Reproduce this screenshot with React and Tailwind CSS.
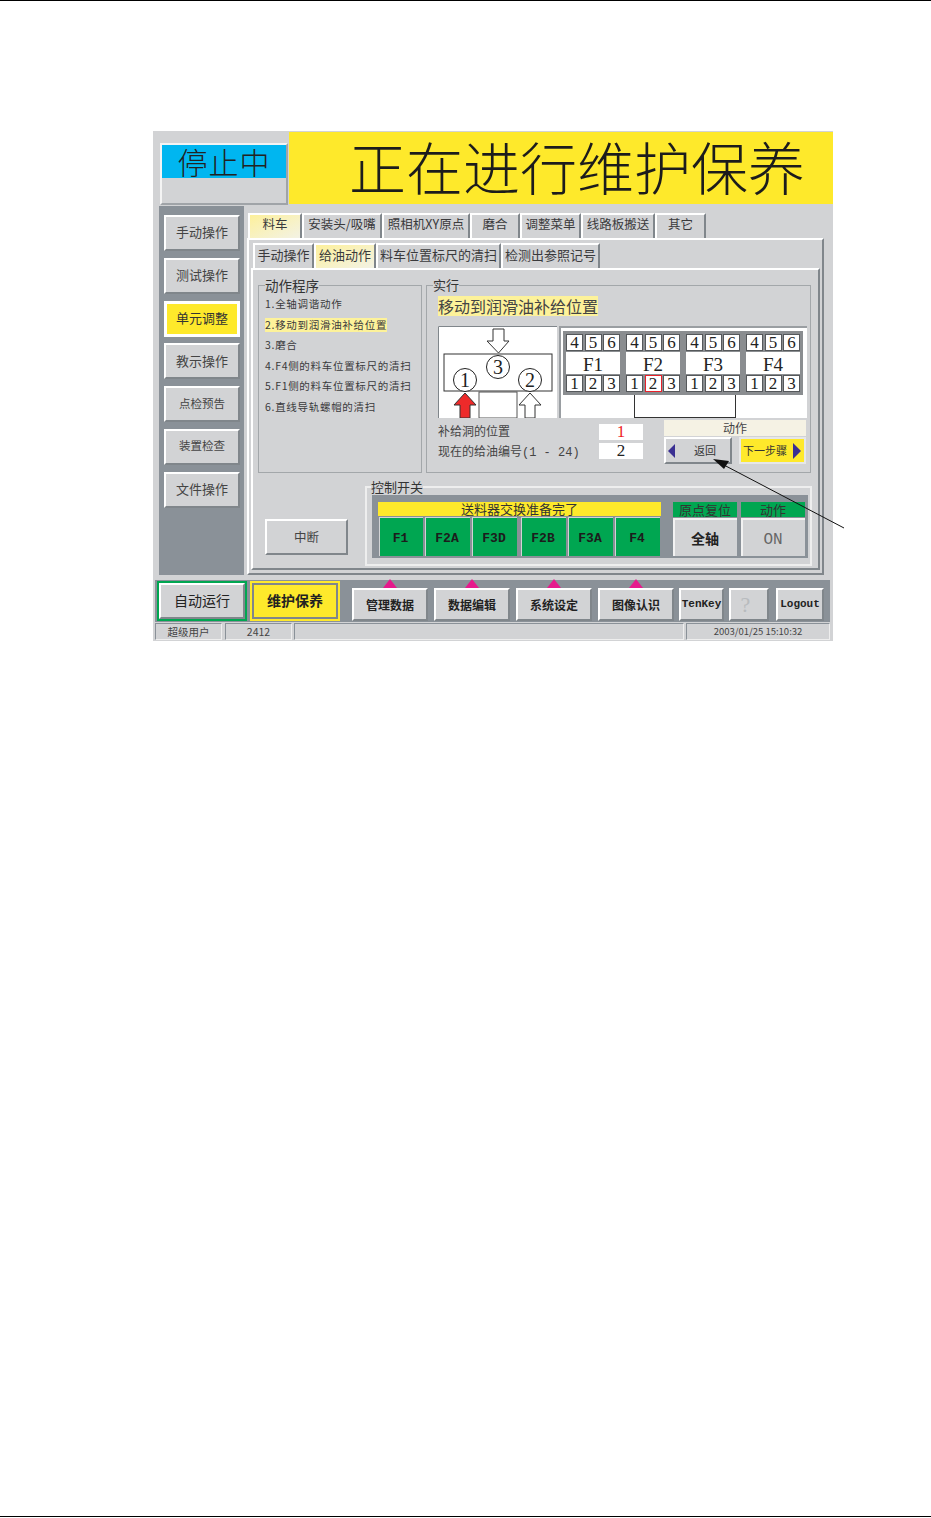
import React from 'react';

const cjk = { fontFamily: '"Noto Sans CJK SC", sans-serif' };
const serif = { fontFamily: '"Liberation Serif", "Noto Sans CJK SC", serif' };
const mono = { fontFamily: '"Liberation Mono", "Noto Sans CJK SC", monospace' };

const raised = 'border-2 border-t-white border-l-white border-r-[#80868b] border-b-[#80868b]';

const sideButtons = [
  { label: '手动操作', size: 'text-[13px]' },
  { label: '测试操作', size: 'text-[13px]' },
  { label: '单元调整', size: 'text-[13px]', active: true },
  { label: '教示操作', size: 'text-[13px]' },
  { label: '点检预告', size: 'text-[11.5px]' },
  { label: '装置检查', size: 'text-[11.5px]' },
  { label: '文件操作', size: 'text-[13px]' },
];

const tabs = [
  { label: '料车', w: 'w-[54px]', active: true },
  { label: '安装头/吸嘴', w: 'w-[80px]' },
  { label: '照相机XY原点', w: 'w-[88px]' },
  { label: '磨合', w: 'w-[50px]' },
  { label: '调整菜单', w: 'w-[61px]' },
  { label: '线路板搬送', w: 'w-[74px]' },
  { label: '其它', w: 'w-[51px]' },
];

const subTabs = [
  { label: '手动操作', w: 'w-[61px]' },
  { label: '给油动作', w: 'w-[62px]', active: true },
  { label: '料车位置标尺的清扫', w: 'w-[125px]' },
  { label: '检测出参照记号', w: 'w-[99px]' },
];

const steps = [
  '1.全轴调谐动作',
  '2.移动到润滑油补给位置',
  '3.磨合',
  '4.F4侧的料车位置标尺的清扫',
  '5.F1侧的料车位置标尺的清扫',
  '6.直线导轨螺帽的清扫',
];

const feeders = ['F1', 'F2A', 'F3D', 'F2B', 'F3A', 'F4'];
const feederWidths = ['w-[44px]', 'w-[45px]', 'w-[45px]', 'w-[45px]', 'w-[45px]', 'w-[45px]'];
const feederGaps = ['', 'ml-[2px]', 'ml-[2px]', 'ml-[4px]', 'ml-[2px]', 'ml-[2px]'];

function Tab({ label, w, active, size = 'text-[12.5px]', pad = 'pb-[4px]' }) {
  return (
    <div
      className={`${w} h-[25px] ${pad} ${size} flex items-center justify-center whitespace-nowrap border-t-2 border-l-2 border-t-white border-l-white border-r-2 border-r-[#80868b] text-[#3a3a3c] ${active ? 'bg-gradient-to-br from-[#fdf09a] to-[#f3f2e4]' : ''}`}
    >
      {label}
    </div>
  );
}

function NumBox({ n, hot }) {
  return (
    <div
      className={`w-[17px] h-[17px] flex items-center justify-center bg-white text-[17px] leading-none text-[#222] border ${hot ? 'border-[#e8202a]' : 'border-[#55585b]'}`}
      style={serif}
    >
      {n}
    </div>
  );
}

function FeederBlock({ name, hot }) {
  return (
    <div className="w-[60px] h-[64px] bg-white border-[3px] border-[#8a8d90] flex flex-col justify-between">
      <div className="flex justify-between bg-[#8a8d90] pb-px">
        {[4, 5, 6].map(n => <NumBox key={n} n={n} />)}
      </div>
      <div className="pt-[3px] text-center text-[19px] leading-none text-[#222]" style={serif}>{name}</div>
      <div className="flex justify-between bg-[#8a8d90] pt-px">
        {[1, 2, 3].map(n => <NumBox key={n} n={n} hot={hot && n === 2} />)}
      </div>
    </div>
  );
}

function MachineDiagram() {
  const circles = [
    { n: 3, x: 60, y: 41 },
    { n: 1, x: 27, y: 54 },
    { n: 2, x: 92, y: 54 },
  ];
  return (
    <svg width="119" height="92" viewBox="0 0 119 92" className="shrink-0">
      <rect width="119" height="92" fill="#fff" />
      <path d="M0.5 92V0.5H119" fill="none" stroke="#80868b" />
      <rect x="6" y="28" width="108" height="37" fill="#fff" stroke="#333" />
      <rect x="41" y="66" width="38" height="26" fill="#fff" stroke="#555" />
      <path d="M55 3H66V15H71L60.500 27L49 15H55Z" fill="#fff" stroke="#333" />
      <path d="M27 67L38 79H32V92H22V79H16Z" fill="#ee2a2a" stroke="#333" />
      <path d="M92 67L103 79H97V92H87V79H81Z" fill="#fff" stroke="#333" />
      {circles.map(c => (
        <g key={c.n}>
          <circle cx={c.x} cy={c.y} r="11.500" fill="#fff" stroke="#222" />
          <text x={c.x} y={c.y + 7} textAnchor="middle" fontSize="20" fill="#222" style={serif}>{c.n}</text>
        </g>
      ))}
    </svg>
  );
}

function BottomButton({ label, w, ml, bold = true, tri, font, color = 'text-[#222]', size = 'text-[12px]', extra = '' }) {
  return (
    <div className={`relative ${w} ${ml} h-[33px] ${raised} bg-[#d2d3d5] flex items-center justify-center ${size} ${bold ? 'font-bold' : ''} ${color} ${extra}`} style={font}>
      {tri && (
        <span className="absolute -top-[11px] left-1/2 -translate-x-1/2 w-0 h-0 border-x-[7px] border-x-transparent border-b-[9px] border-b-[#e6198c]" />
      )}
      {label}
    </div>
  );
}

export default function App() {
  return (
    <div className="relative w-[931px] h-[1518px] bg-white flex flex-col justify-between overflow-hidden" style={cjk}>
      <div className="h-[1px] bg-black" />

      <div className="ml-[153px] mb-auto mt-[130px] w-[680px] h-[510px] bg-[#d2d3d5]">
        {/* header */}
        <div className="flex h-[75px]">
          <div className="w-[136px] pl-[7px] pt-[12px]">
            <div className="w-[128px] h-[62px] border-2 border-t-[#f4f4f4] border-l-[#f4f4f4] border-r-[#a0a4a8] border-b-[#a0a4a8]">
              <div className="h-[33px] pb-[2px] bg-[#00b6f0] flex items-center justify-center text-[30px] font-light tracking-[1px] text-[#222] leading-none">
                停止中
              </div>
            </div>
          </div>
          <div className="w-[544px] h-[72px] mt-[1px] pb-[6px] bg-[#fee92b] flex items-center pl-[60px] text-[57px] font-light leading-none whitespace-nowrap text-[#1c1c1c]">
            正在进行维护保养
          </div>
        </div>

        {/* main */}
        <div className="flex pl-[6px]">
          <div className="w-[85px] h-[369px] bg-[#8a9198] pl-[5px] pt-[9px] flex flex-col gap-[6.8px]">
            {sideButtons.map(b => (
              <div
                key={b.label}
                className={`w-[76px] h-[36px] pb-[2px] flex items-center justify-center ${b.size} ${b.active ? 'bg-[#fee92b] border-[3px] border-white outline outline-1 outline-[#8a9198] text-[#333]' : `${raised} bg-[#d2d3d5] text-[#444]`}`}
              >
                {b.label}
              </div>
            ))}
          </div>

          <div className="pl-[2px] pt-[7px]">
            <div className="flex pl-[2px]">
              {tabs.map(t => <Tab key={t.label} {...t} />)}
            </div>
            <div className="ml-px w-[577px] h-[337px] border-2 border-t-white border-l-white border-r-[#80868b] border-b-[#80868b] pl-[2px] pt-[3px]">
              <div className="flex pl-[2px]">
                {subTabs.map(t => <Tab key={t.label} {...t} size="text-[13px]" pad="pb-[3px]" />)}
              </div>
              <div className="w-[569px] h-[302px] border-2 border-t-white border-l-white border-r-[#80868b] border-b-[#80868b] pl-[5px] pt-[7px]">
                <div className="flex gap-[4px]">
                  <fieldset className="w-[164px] h-[196px] border border-[#a3a7aa] pl-[6px]">
                    <legend className="text-[13.5px] leading-[16px] text-[#333]">动作程序</legend>
                    <div className="flex flex-col gap-[4px] mt-[3px]">
                      {steps.map((s, i) => (
                        <div key={s} className="h-[16.5px] flex items-center">
                          <span className={`text-[10.5px] tracking-[0.7px] leading-[14px] whitespace-nowrap text-[#3a3a3c] ${i === 1 ? 'bg-[#fdf29a]' : ''}`}>{s}</span>
                        </div>
                      ))}
                    </div>
                  </fieldset>

                  <fieldset className="w-[385px] h-[196px] border border-[#a3a7aa]">
                    <legend className="ml-[6px] text-[13px] leading-[16px] text-[#333]">实行</legend>
                    <div className="ml-[11px] mt-[3px] w-fit bg-[#fdf29a] text-[16px] leading-[20px] text-[#444]">移动到润滑油补给位置</div>
                    <div className="flex ml-[11px] mt-[10px] gap-[2px]">
                      <MachineDiagram />
                      <div className="w-[248px] h-[92px] bg-white border-l-2 border-t-2 border-[#9a9ea2] pl-[2px] pt-[3px]">
                        <div className="flex">
                          <FeederBlock name="F1" />
                          <FeederBlock name="F2" hot />
                          <FeederBlock name="F3" />
                          <FeederBlock name="F4" />
                        </div>
                        <div className="ml-[71px] w-[102px] h-[23px] border border-t-0 border-[#333]" />
                      </div>
                    </div>
                    <div className="flex ml-[11px] mt-[2px]">
                      <div className="w-[161px] pt-px text-[12px] leading-[20px] text-[#444]">
                        <div>补给洞的位置</div>
                        <div className="whitespace-nowrap">现在的给油编号<span style={mono}>(1 - 24)</span></div>
                      </div>
                      <div className="w-[44px] pt-[4px] flex flex-col gap-[3px]">
                        <div className="h-[16px] bg-white text-center text-[17px] leading-[16px] text-[#ee1c25]" style={serif}>1</div>
                        <div className="h-[16px] bg-white text-center text-[17px] leading-[16px] text-[#222]" style={serif}>2</div>
                      </div>
                      <div className="ml-[21px] w-[142px]">
                        <div className="h-[16px] bg-[#f5f2e4] text-center text-[12px] leading-[16px] text-[#444]">动作</div>
                        <div className="flex justify-between mt-px">
                          <div className={`w-[68px] h-[27px] ${raised} flex items-center text-[11px] text-[#333]`}>
                            <span className="ml-[2px] w-0 h-0 border-y-[7px] border-y-transparent border-r-[7px] border-r-[#3a2f92]" />
                            <span className="ml-[19px]">返回</span>
                          </div>
                          <div className="w-[67px] h-[27px] bg-[#fee92b] border-2 border-[#e6e7e8] flex items-center text-[11px] text-[#333] whitespace-nowrap">
                            <span className="ml-[2px]">下一步骤</span>
                            <span className="ml-[6px] w-0 h-0 border-y-[8px] border-y-transparent border-l-[8px] border-l-[#3a2f92]" />
                          </div>
                        </div>
                      </div>
                    </div>
                  </fieldset>
                </div>

                <div className="flex mt-[6px]">
                  <div className="w-[107px] pt-[40px] pl-[7px]">
                    <div className={`w-[83px] h-[36px] ${raised} flex items-center justify-center text-[12.5px] text-[#444]`}>中断</div>
                  </div>
                  <fieldset className="w-[447px] h-[87px] border-2 border-[#eeeeee]">
                    <legend className="ml-[4px] text-[13px] leading-[16px] text-[#333]">控制开关</legend>
                    <div className="ml-[5px] w-[436px] h-[63px] bg-[#8a9198] pl-[6px] pt-[7px] flex">
                      <div className="w-[283px]">
                        <div className="h-[14px] pb-px bg-[#fee92b] text-center text-[13px] leading-[13px] text-[#333]">送料器交换准备完了</div>
                        <div className="flex mt-[1px] ml-px">
                          {feeders.map((f, i) => (
                            <div
                              key={f}
                              className={`${feederWidths[i]} ${feederGaps[i]} h-[39px] pt-[3px] pr-[2px] bg-[#00a651] border-l border-t border-[#d2d3d5] flex items-center justify-center text-[13px] font-bold text-[#1c1c1c]`}
                              style={mono}
                            >
                              {f}
                            </div>
                          ))}
                        </div>
                      </div>
                      <div className="ml-[12px] w-[64px]">
                        <div className="h-[15px] bg-[#00a651] text-center text-[13px] leading-[15px] text-[#333]">原点复位</div>
                        <div className="h-[38px] mt-[1px] pr-[2px] bg-[#d2d3d5] border-l-2 border-t-2 border-[#f2f2f2] flex items-center justify-center text-[14px] font-bold text-[#222]">全轴</div>
                      </div>
                      <div className="ml-[4px] w-[64px]">
                        <div className="h-[15px] bg-[#00a651] text-center text-[13px] leading-[15px] text-[#333]">动作</div>
                        <div className="h-[38px] mt-[1px] pt-[4px] pr-[2px] bg-[#d2d3d5] border-l-2 border-t-2 border-[#f2f2f2] flex items-center justify-center text-[16px] text-[#666]" style={mono}>ON</div>
                      </div>
                    </div>
                  </fieldset>
                </div>
              </div>
            </div>
          </div>
        </div>

        {/* bottom bar */}
        <div className="ml-[2px] mt-[5px] w-[675px] h-[42px] bg-[#8a9198] flex items-end pb-px">
          <div className="ml-[2px] w-[90px] h-[40px] border-2 border-[#00a651] bg-[#d2d3d5] flex items-center justify-center">
            <div className={`w-[86px] h-[36px] pb-[2px] ${raised} flex items-center justify-center text-[14px] text-[#222]`}>自动运行</div>
          </div>
          <div className="ml-[3px] w-[90px] h-[40px] border-2 border-[#fee92b] bg-[#d2d3d5] flex items-center justify-center">
            <div className="w-[86px] h-[36px] pb-[2px] border-2 border-[#80868b] bg-[#fee92b] flex items-center justify-center text-[14px] font-bold text-[#222]">维护保养</div>
          </div>
          <BottomButton label="管理数据" w="w-[76px]" ml="ml-[12px]" tri />
          <BottomButton label="数据编辑" w="w-[76px]" ml="ml-[6px]" tri />
          <BottomButton label="系统设定" w="w-[76px]" ml="ml-[6px]" tri />
          <BottomButton label="图像认识" w="w-[76px]" ml="ml-[6px]" tri />
          <BottomButton label="TenKey" w="w-[45px]" ml="ml-[5px]" font={mono} size="text-[11px]" />
          <BottomButton label="?" w="w-[40px]" ml="ml-[5px]" bold={false} font={serif} color="text-[#b8bbbe]" size="text-[22px]" extra="pr-[7px]" />
          <BottomButton label="Logout" w="w-[48px]" ml="ml-[7px]" font={mono} size="text-[11px]" />
        </div>

        {/* status bar */}
        <div className="ml-[2px] mt-px flex h-[17px] text-[10.5px] leading-[15px] text-[#444]">
          {[
            { text: '超级用户', w: 'w-[67px]' },
            { text: '2412', w: 'w-[67px]', ml: 'ml-[3px]' },
            { text: '', w: 'w-[390px]', ml: 'ml-[2px]' },
            { text: '2003/01/25 15:10:32', w: 'w-[144px]', ml: 'ml-[2px]', small: true },
          ].map(c => (
            <div
              key={c.w + c.text}
              className={`${c.w} ${c.ml || ''} ${c.small ? 'text-[9.5px]' : ''} border border-t-[#8a9198] border-l-[#8a9198] border-r-[#eeeeee] border-b-[#eeeeee] text-center whitespace-nowrap`}
            >
              {c.text}
            </div>
          ))}
        </div>
      </div>

      <div className="h-[1px] mb-[1px] bg-black" />

      {/* callout arrow over the screenshot */}
      <svg className="absolute left-0 top-0 pointer-events-none" width="931" height="1518">
        <path d="M844 528L722 464" stroke="#111" strokeWidth="1" fill="none" />
        <path d="M713 459L729 461L724 469Z" fill="#111" />
      </svg>
    </div>
  );
}
